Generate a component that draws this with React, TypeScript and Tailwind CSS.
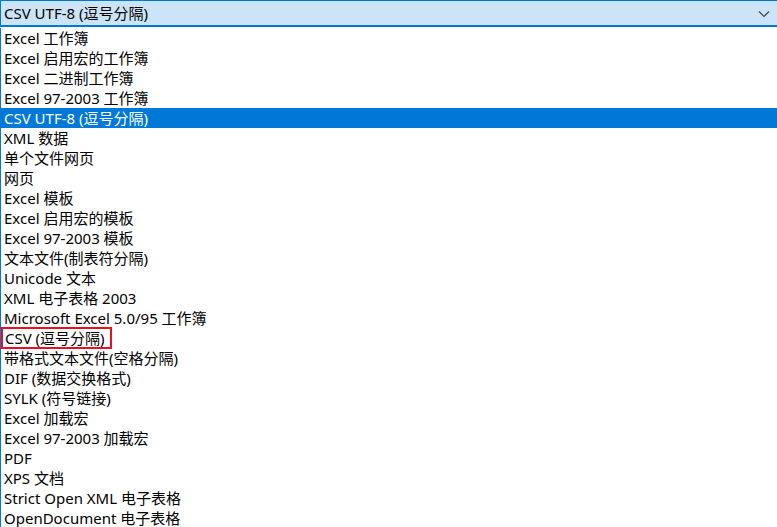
import React from "react";

const items = [
  "Excel 工作簿",
  "Excel 启用宏的工作簿",
  "Excel 二进制工作簿",
  "Excel 97-2003 工作簿",
  "CSV UTF-8 (逗号分隔)",
  "XML 数据",
  "单个文件网页",
  "网页",
  "Excel 模板",
  "Excel 启用宏的模板",
  "Excel 97-2003 模板",
  "文本文件(制表符分隔)",
  "Unicode 文本",
  "XML 电子表格 2003",
  "Microsoft Excel 5.0/95 工作簿",
  "CSV (逗号分隔)",
  "带格式文本文件(空格分隔)",
  "DIF (数据交换格式)",
  "SYLK (符号链接)",
  "Excel 加载宏",
  "Excel 97-2003 加载宏",
  "PDF",
  "XPS 文档",
  "Strict Open XML 电子表格",
  "OpenDocument 电子表格",
];

export default function App() {
  return (
    <div
      className="w-[777px] h-[527px] overflow-hidden bg-white text-[15px] text-black"
      style={{ fontFamily: '"Noto Sans", "Noto Sans CJK SC", sans-serif' }}
    >
      <div className="h-[27px] bg-[#cce4f7] border-l border-t border-b-2 border-[#0078d7] flex items-center justify-between pl-[3px] pr-[7px]">
        <span className="leading-none">CSV UTF-8 (逗号分隔)</span>
        <svg width="12" height="8" viewBox="0 0 12 8" className="mt-[2px]">
          <path d="M1 1.5 L6 6.5 L11 1.5" fill="none" stroke="#444" strokeWidth="1.2" />
        </svg>
      </div>
      <div className="h-px" />
      <div className="border-l border-[#0078d7] flex flex-col">
        {items.map((t, i) => (
          <div
            key={i}
            className={
              "h-[20px] flex items-center pl-[3px] leading-none whitespace-nowrap " +
              (i === 4 ? "bg-[#0078d7] text-white" : "")
            }
          >
            {i === 15 ? (
              <span className="h-[22px] -ml-[3px] pl-[2px] pr-[5px] border-2 border-[#e81123] flex items-center">
                {t}
              </span>
            ) : (
              <span>{t}</span>
            )}
          </div>
        ))}
      </div>
    </div>
  );
}
